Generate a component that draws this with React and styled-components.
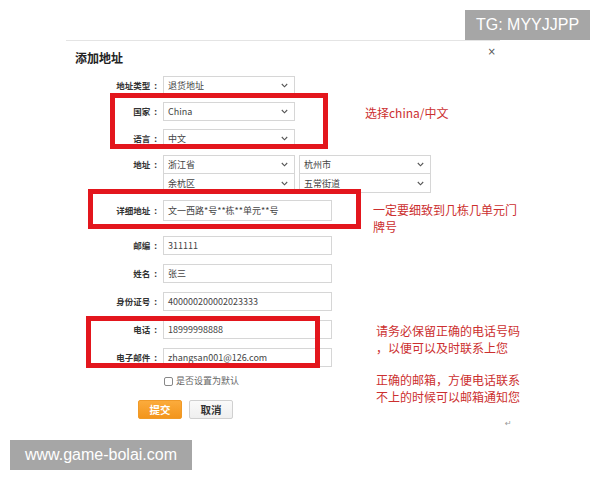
import React from "react";
import styled, { createGlobalStyle } from "styled-components";

const GlobalStyle = createGlobalStyle`
  body {
    margin: 0;
    background: #fff;
    font-family: "Noto Sans CJK SC", "Noto Sans", sans-serif;
  }
`;

const Chevron = () => (
  <svg width="7" height="5" viewBox="0 0 7 5">
    <path d="M0.8 1 L3.5 3.8 L6.2 1" fill="none" stroke="#555" strokeWidth="1.1" />
  </svg>
);

const App = () => {
  return (
    <Page>
      <GlobalStyle />
      <Dialog>
        <Header>
          <Title>添加地址</Title>
          <Close>×</Close>
        </Header>

        <Row $mt={9}>
          <Label>地址类型</Label>
          <Select>
            退货地址
            <Chevron />
          </Select>
        </Row>

        <Group $mt={7}>
          <Highlight $top={-9} $bottom={-1} $left={44} $width={218} />
          <Row>
            <Label>国家</Label>
            <Select>
              China
              <Chevron />
            </Select>
          </Row>
          <Row $mt={8}>
            <Label>语言</Label>
            <Select>
              中文
              <Chevron />
            </Select>
          </Row>
          <Note $left={299} $top={2}>选择china/中文</Note>
        </Group>

        <Row $mt={7}>
          <Label>地址</Label>
          <SelectGrid>
            <Select>
              浙江省
              <Chevron />
            </Select>
            <Select>
              杭州市
              <Chevron />
            </Select>
            <Select $stacked>
              余杭区
              <Chevron />
            </Select>
            <Select $stacked>
              五常街道
              <Chevron />
            </Select>
          </SelectGrid>
        </Row>

        <Group $mt={7}>
          <Highlight $top={-11} $bottom={-8} $left={22} $width={273} />
          <Row>
            <Label $h={21}>详细地址</Label>
            <Input $h={21}>文一西路*号**栋**单元**号</Input>
          </Row>
          <Note $left={307} $top={1}>
            一定要细致到几栋几单元门
            <br />
            牌号
          </Note>
        </Group>

        <Row $mt={15}>
          <Label>邮编</Label>
          <Input>311111</Input>
        </Row>
        <Row $mt={9}>
          <Label>姓名</Label>
          <Input>张三</Input>
        </Row>
        <Row $mt={9}>
          <Label>身份证号</Label>
          <Input>400000200002023333</Input>
        </Row>

        <Group $mt={9}>
          <Row>
            <Label>电话</Label>
            <Input>18999998888</Input>
          </Row>
          <Row $mt={9}>
            <Label>电子邮件</Label>
            <Input>zhangsan001@126.com</Input>
          </Row>
          <Highlight $top={-4} $bottom={-1} $left={20} $width={234} />
          <Note $left={310} $top={2}>
            请务必保留正确的电话号码
            <br />
            ，以便可以及时联系上您
            <Para>
              正确的邮箱，方便电话联系
              <br />
              不上的时候可以邮箱通知您
            </Para>
          </Note>
        </Group>

        <CheckRow>
          <Box />
          是否设置为默认
        </CheckRow>

        <ButtonRow>
          <Button $primary>提交</Button>
          <Button>取消</Button>
        </ButtonRow>
      </Dialog>

      <Return>↵</Return>
      <Stamp $left={465} $top={10} $width={125}>
        TG: MYYJJPP
      </Stamp>
      <Stamp $left={10} $top={440} $width={182}>
        www.game-bolai.com
      </Stamp>
    </Page>
  );
};

const Page = styled.div`
  position: relative;
  width: 600px;
  height: 480px;
  overflow: hidden;
  padding-top: 40px;
  box-sizing: border-box;
`;

const Dialog = styled.div`
  margin-left: 66px;
  width: 434px;
  border-top: 1px solid #e4e4e4;
`;

const Header = styled.div`
  display: flex;
  justify-content: space-between;
  align-items: flex-start;
  padding: 8px 4px 0 9px;
`;

const Title = styled.div`
  font-size: 12px;
  font-weight: bold;
  line-height: 18px;
  color: #222;
`;

const Close = styled.div`
  font-family: "DejaVu Sans", sans-serif;
  font-size: 10px;
  line-height: 12px;
  margin-top: -3px;
  color: #555;
`;

const Row = styled.div`
  display: flex;
  align-items: flex-start;
  margin-top: ${(p) => p.$mt || 0}px;
`;

const Group = styled.div`
  position: relative;
  margin-top: ${(p) => p.$mt || 0}px;
`;

const Label = styled.div`
  width: 91px;
  flex: none;
  text-align: right;
  font-size: 8.5px;
  font-weight: bold;
  line-height: ${(p) => p.$h || 19}px;
  color: #333;
  margin-right: 6px;
  &::after {
    content: ":";
    margin-left: 4px;
  }
`;

const Select = styled.div`
  width: 132px;
  height: 19px;
  box-sizing: border-box;
  border: 1px solid #d6d6d6;
  border-top: ${(p) => (p.$stacked ? "none" : "1px solid #d6d6d6")};
  display: flex;
  align-items: center;
  justify-content: space-between;
  padding: 0 6px 0 4px;
  font-size: 9px;
  color: #444;
  background: #fff;
`;

const SelectGrid = styled.div`
  display: grid;
  grid-template-columns: 132px 132px;
  column-gap: 4px;
`;

const Input = styled.div`
  width: 169px;
  height: ${(p) => p.$h || 19}px;
  box-sizing: border-box;
  border: 1px solid #d6d6d6;
  padding-left: 4px;
  display: flex;
  align-items: center;
  font-size: 9px;
  color: #444;
  background: #fff;
`;

const Highlight = styled.div`
  position: absolute;
  top: ${(p) => p.$top}px;
  bottom: ${(p) => p.$bottom}px;
  left: ${(p) => p.$left}px;
  width: ${(p) => p.$width}px;
  box-sizing: border-box;
  border: 5px solid #e3161d;
  pointer-events: none;
`;

const Note = styled.div`
  position: absolute;
  left: ${(p) => p.$left}px;
  top: ${(p) => p.$top}px;
  width: 160px;
  font-size: 12px;
  line-height: 17px;
  color: #cc2f2f;
  white-space: nowrap;
`;

const Para = styled.div`
  margin-top: 15px;
`;

const CheckRow = styled.div`
  display: flex;
  align-items: center;
  gap: 3px;
  margin-top: 8px;
  padding-left: 98px;
  font-size: 9px;
  line-height: 12px;
  color: #666;
`;

const Box = styled.span`
  width: 9px;
  height: 9px;
  box-sizing: border-box;
  border: 1px solid #888;
  border-radius: 2px;
  background: #fff;
`;

const ButtonRow = styled.div`
  display: flex;
  gap: 7px;
  margin-top: 13px;
  padding-left: 72px;
`;

const Button = styled.div`
  width: 44px;
  height: 19px;
  box-sizing: border-box;
  display: flex;
  align-items: center;
  justify-content: center;
  font-size: 10.5px;
  font-weight: bold;
  border-radius: 2px;
  color: ${(p) => (p.$primary ? "#fff" : "#333")};
  background: ${(p) =>
    p.$primary ? "linear-gradient(#fbab3c, #f3951c)" : "linear-gradient(#fafafa, #efefef)"};
  border: 1px solid ${(p) => (p.$primary ? "#f09a28" : "#d0d0d0")};
`;

const Return = styled.div`
  position: absolute;
  left: 505px;
  top: 419px;
  font-family: "DejaVu Sans", sans-serif;
  font-size: 8px;
  color: #999;
`;

const Stamp = styled.div`
  position: absolute;
  left: ${(p) => p.$left}px;
  top: ${(p) => p.$top}px;
  width: ${(p) => p.$width}px;
  height: 30px;
  background: #a6a6a6;
  color: #fff;
  font-family: "Liberation Sans", Arial, sans-serif;
  font-size: 16px;
  display: flex;
  align-items: center;
  justify-content: center;
`;

export default App;
